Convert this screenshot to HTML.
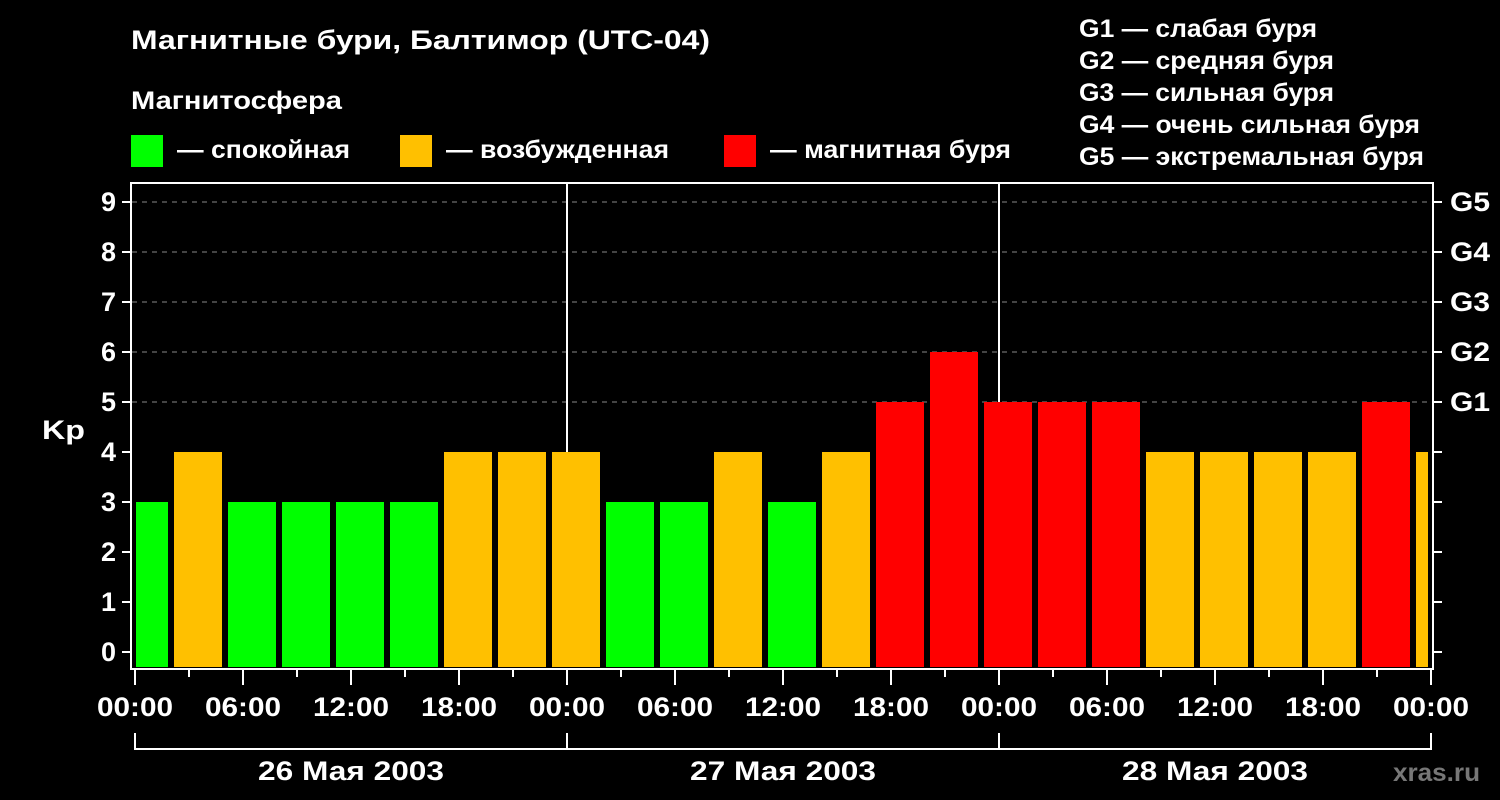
<!DOCTYPE html><html><head><meta charset="utf-8"><style>
body{margin:0;background:#000;width:1500px;height:800px;overflow:hidden}
svg{display:block}
text{font-family:"Liberation Sans",sans-serif;font-weight:bold;fill:#fff}
</style></head><body>
<svg width="1500" height="800" xmlns="http://www.w3.org/2000/svg">
<text x="131" y="49" font-size="27" textLength="579" lengthAdjust="spacingAndGlyphs">Магнитные бури, Балтимор (UTC-04)</text>
<text x="131" y="109" font-size="25" textLength="211" lengthAdjust="spacingAndGlyphs">Магнитосфера</text>
<rect x="131" y="135" width="32" height="32" fill="#00ff00"/><text x="177" y="158" font-size="25" textLength="173" lengthAdjust="spacingAndGlyphs">— спокойная</text>
<rect x="400" y="135" width="32" height="32" fill="#ffc000"/><text x="446" y="158" font-size="25" textLength="223" lengthAdjust="spacingAndGlyphs">— возбужденная</text>
<rect x="724" y="135" width="32" height="32" fill="#ff0000"/><text x="770" y="158" font-size="25" textLength="241" lengthAdjust="spacingAndGlyphs">— магнитная буря</text>
<g font-size="25"><text x="1079" y="37" textLength="238" lengthAdjust="spacingAndGlyphs">G1 — слабая буря</text><text x="1079" y="69" textLength="255" lengthAdjust="spacingAndGlyphs">G2 — средняя буря</text><text x="1079" y="101" textLength="255" lengthAdjust="spacingAndGlyphs">G3 — сильная буря</text><text x="1079" y="133" textLength="341" lengthAdjust="spacingAndGlyphs">G4 — очень сильная буря</text><text x="1079" y="165" textLength="345" lengthAdjust="spacingAndGlyphs">G5 — экстремальная буря</text></g>
<g stroke="#888" stroke-width="1" stroke-dasharray="5,5">
<line x1="132" y1="202" x2="1432" y2="202"/><line x1="132" y1="252" x2="1432" y2="252"/><line x1="132" y1="302" x2="1432" y2="302"/><line x1="132" y1="352" x2="1432" y2="352"/><line x1="132" y1="402" x2="1432" y2="402"/></g>
<g id="bars"></g>
<g stroke="#fff" stroke-width="2" fill="none">
<rect x="131" y="183" width="1302" height="486"/>
<line x1="567" y1="183" x2="567" y2="452"/><line x1="999" y1="183" x2="999" y2="402"/>
<path id="ticks" d=""/>
<path d="M135 733V749H1431V733M567 733V749M999 733V749"/>
</g>
<g font-size="27" text-anchor="end" id="yl"></g>
<text x="42" y="439" font-size="27" textLength="43" lengthAdjust="spacingAndGlyphs">Kp</text>
<g font-size="27"><text x="1450" y="211" textLength="40" lengthAdjust="spacingAndGlyphs">G5</text><text x="1450" y="261" textLength="40" lengthAdjust="spacingAndGlyphs">G4</text><text x="1450" y="311" textLength="40" lengthAdjust="spacingAndGlyphs">G3</text><text x="1450" y="361" textLength="40" lengthAdjust="spacingAndGlyphs">G2</text><text x="1450" y="411" textLength="40" lengthAdjust="spacingAndGlyphs">G1</text></g>
<g font-size="27" id="xl"></g>
<g font-size="27"><text x="258" y="780" textLength="186" lengthAdjust="spacingAndGlyphs">26 Мая 2003</text><text x="690" y="780" textLength="186" lengthAdjust="spacingAndGlyphs">27 Мая 2003</text><text x="1122" y="780" textLength="186" lengthAdjust="spacingAndGlyphs">28 Мая 2003</text></g>
<text x="1393" y="781" font-size="25" textLength="87" lengthAdjust="spacingAndGlyphs" style="fill:#777">xras.ru</text>
</svg>
<script>
var v=[3,4,3,3,3,3,4,4,4,3,3,4,3,4,5,6,5,5,5,4,4,4,4,5,4],ns="http://www.w3.org/2000/svg",b=document.getElementById('bars');
v.forEach(function(k,j){var x=120+54*j,x2=x+48;if(x<136)x=136;if(x2>1428)x2=1428;var r=document.createElementNS(ns,'rect');r.setAttribute('x',x);r.setAttribute('width',x2-x);r.setAttribute('y',652-50*k);r.setAttribute('height',15+50*k);r.setAttribute('fill',k>=5?'#ff0000':k==4?'#ffc000':'#00ff00');b.appendChild(r);});
var d='';for(var i=0;i<=9;i++){var y=652-50*i;d+='M122 '+y+'H131M1433 '+y+'H1442';}
for(var h=0;h<=24;h++){var x=135+54*h;d+='M'+x+' 669V'+(h%2?677:685);}
document.getElementById('ticks').setAttribute('d',d);
var yl=document.getElementById('yl');for(i=0;i<=9;i++){var t=document.createElementNS(ns,'text');t.setAttribute('x',116);t.setAttribute('y',661-50*i);t.textContent=i;yl.appendChild(t);}
var xl=document.getElementById('xl'),lab=['00:00','06:00','12:00','18:00'];for(h=0;h<=12;h++){t=document.createElementNS(ns,'text');t.setAttribute('x',97+108*h);t.setAttribute('y',716);t.setAttribute('textLength',76);t.setAttribute('lengthAdjust','spacingAndGlyphs');t.textContent=lab[h%4];xl.appendChild(t);}
</script>
</body></html>
